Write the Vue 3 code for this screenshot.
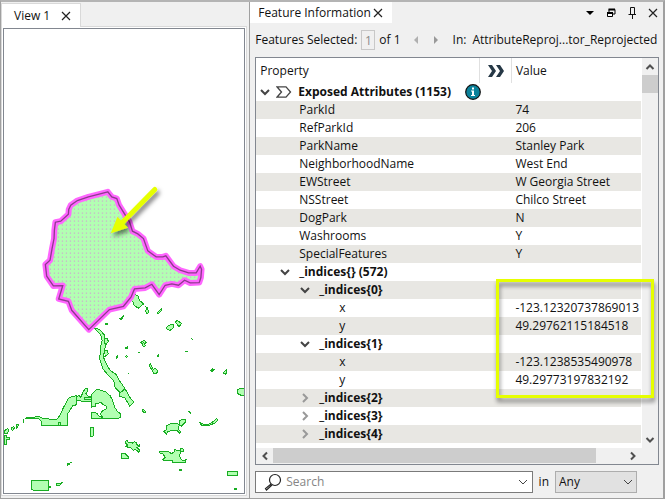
<script setup>
import { computed, ref } from 'vue'

const nodes = ref([
  { id: 0, parent: null, depth: 0, name: 'Exposed Attributes (1153)', open: true, root: true },
  { id: 1, parent: 0, depth: 1, name: 'ParkId', value: '74' },
  { id: 2, parent: 0, depth: 1, name: 'RefParkId', value: '206' },
  { id: 3, parent: 0, depth: 1, name: 'ParkName', value: 'Stanley Park' },
  { id: 4, parent: 0, depth: 1, name: 'NeighborhoodName', value: 'West End' },
  { id: 5, parent: 0, depth: 1, name: 'EWStreet', value: 'W Georgia Street' },
  { id: 6, parent: 0, depth: 1, name: 'NSStreet', value: 'Chilco Street' },
  { id: 7, parent: 0, depth: 1, name: 'DogPark', value: 'N' },
  { id: 8, parent: 0, depth: 1, name: 'Washrooms', value: 'Y' },
  { id: 9, parent: 0, depth: 1, name: 'SpecialFeatures', value: 'Y' },
  { id: 10, parent: 0, depth: 1, name: '_indices{} (572)', open: true },
  { id: 11, parent: 10, depth: 2, name: '_indices{0}', open: true },
  { id: 12, parent: 11, depth: 3, name: 'x', value: '-123.12320737869013' },
  { id: 13, parent: 11, depth: 3, name: 'y', value: '49.29762115184518' },
  { id: 14, parent: 10, depth: 2, name: '_indices{1}', open: true },
  { id: 15, parent: 14, depth: 3, name: 'x', value: '-123.1238535490978' },
  { id: 16, parent: 14, depth: 3, name: 'y', value: '49.29773197832192' },
  { id: 17, parent: 10, depth: 2, name: '_indices{2}', open: false },
  { id: 18, parent: 10, depth: 2, name: '_indices{3}', open: false },
  { id: 19, parent: 10, depth: 2, name: '_indices{4}', open: false },
])

const visible = computed(() =>
  nodes.value.filter((node) => {
    for (let p = node.parent; p !== null; p = nodes.value[p].parent) {
      if (!nodes.value[p].open) return false
    }
    return true
  })
)

const search = ref('')
const scope = ref('Any')
const featureNumber = ref('1')
const coast =
  'M323 65L300 71L265 80L232 91L212 105L206 118L205 132L182 153L166 156L163 180L162 205L156 235L150 270L136 283L140 318L160 347L188 346L176 386L205 393L215 420L266 478L328 418L370 408L393 380L403 356L435 353L455 342L477 373L495 345L515 341L535 345L553 330L570 338L597 337L602 322L604 297L600 288L588 308L565 308L540 300L520 288L497 257L488 260L468 260L443 242L430 205L413 191L397 183L388 155L357 105L350 85L335 80Z'
</script>

<template>
  <main class="workspace">
    <section class="view">
      <div class="tabs">
        <div class="tab view-tab">
          <span>View 1</span>
          <button class="plain" aria-label="Close View 1">
            <svg width="10" height="10" viewBox="0 0 10 10"><path class="thin" d="M1 1L9 9M9 1L1 9" /></svg>
          </button>
        </div>
      </div>
      <div class="view-body">
        <svg class="map" viewBox="12 87 720 1392" preserveAspectRatio="xMidYMid slice" role="img" aria-label="Park map">
          <defs>
            <pattern id="dots" x="2" y="3" width="12" height="12" patternUnits="userSpaceOnUse">
              <rect width="12" height="12" fill="#b2ffb2" />
              <rect x="4" y="4" width="3" height="3" fill="#dd79dd" />
            </pattern>
            <filter id="shade" x="-30%" y="-30%" width="180%" height="180%">
              <feDropShadow dx="7" dy="10" stdDeviation="6" flood-color="#000" flood-opacity=".5" />
            </filter>
          </defs>
          <g class="park" transform="translate(0 990)">
            <path d="M280 -8L302 14L306 30L301 50L299 88L309 116L325 136L341 151L344 170L358 185L359 198L375 203L389 228L401 215L390 202L374 174L354 145L350 134L329 119L316 95L310 80L315 50L314 15L298 -3Z" />
            <path d="M315 26L321 25L325 33L319 41L315 38M315 59L321 61L325 70L318 76L313 79M360 188L374 176" />
            <path d="M76 263L100 261L116 257L128 264L158 267L170 268L180 254L188 236L203 207L211 200L230 196V223L218 226L203 250V286H125V275L116 264L100 263L76 265Z" />
            <path d="M230 198L238 196L242 202L249 184L256 174L262 175V184L257 190L264 197L275 198V213L244 212L230 209ZM252 201H275V207H252ZM175 276H180V286H175Z" />
            <path d="M275 230V192L288 179L298 178L316 184L330 196L338 211L343 230L352 243L361 250V261L357 263H275V245H284L291 250L298 259L307 261L301 250L307 242L320 234V228L308 222L302 215L291 221L285 219V228Z" />
            <path d="M71 265V277M49 284L54 281L56 285L50 293ZM35 292L41 289L44 292L38 300L34 298ZM18 297L24 295L26 300L22 308L14 309L12 304ZM12 316H20V320L28 322V328H20L18 343H12Z" />
            <path d="M271 292H281V312L278 319H271ZM364 370H375L386 380V385H364ZM94 451H146V481H102L94 475ZM148 468H152V472H148Z" />
            <path d="M202 400L208 398V402L202 404ZM212 397L215 394M169 460H181L179 466H170ZM183 459L188 455M539 418H545V421H539ZM703 475H710V478H703ZM682 424H711V436H682Z" />
            <path d="M375 333L381 331L384 336L397 338L402 334L410 336L411 346L418 343L417 349L410 351L418 359L416 365L407 358L399 359L391 350L383 350L377 348L383 344L376 338Z" />
            <path d="M478 363H504L514 370L523 363V358L539 361L542 355L551 356V363L541 364L538 377L541 384L549 391L558 388L554 397H518L516 391L490 391L488 386L496 381L487 369H480Z" />
            <path d="M491 303L500 298V286L513 279L530 278L537 284L534 297L542 305L538 308L530 300L512 301L502 304L499 311ZM538 272L545 267L551 268L557 267L556 275L544 287L538 284Z" />
            <path d="M599 276L609 281L626 281L637 275L649 265L653 269L646 277L629 284L615 286L604 285Z" />
            <path d="M446 104L451 100L456 112L460 117L465 113L473 121L470 128L461 129L457 121ZM426 239L431 238L437 244L434 248L429 244ZM713 178L720 173L732 174V194H721L713 190Z" />
            <path d="M422 36L427 33L432 29L438 37L434 41L435 47L429 48L427 41ZM429 36L434 41M376 53L381 49L382 54L378 56ZM376 78L380 75L382 79L378 81ZM348 80L352 77V83L348 84ZM415 68L419 66M470 77L475 72L476 76L472 79ZM571 25L578 27M554 62L562 65M565 242L572 249M382 132L386 128" />
            <path d="M632 121L637 116L641 118L635 124ZM669 128L678 119V129L675 132ZM510 -2L514 0" />
            <path d="M391 -107L402 -109L414 -102L418 -90L430 -79L414 -66L402 -75L398 -87L386 -94Z" />
            <path d="M438 -70L442 -68L446 -53L440 -50L436 -59L440 -63ZM470 -52L483 -64L485 -60L476 -51ZM360 -35L370 -43L368 -37L362 -32ZM316 -21L322 -19L318 -16Z" />
            <path d="M499 -9L506 -15L520 -18L520 -8L510 0L501 -2ZM525 -24L531 -30L544 -20L537 -11Z" />
          </g>
          <g transform="translate(0 510)">
            <path :d="coast" fill="url(#dots)" stroke="#f6f" stroke-width="18" stroke-linejoin="round" />
            <path :d="coast" fill="none" stroke="#8c3c8c" stroke-width="4" />
            <g filter="url(#shade)">
              <path d="M464 58L366 158" stroke="#e6ff00" stroke-width="15" stroke-linecap="round" />
              <path d="M332 189L352 140L383 173Z" fill="#e6ff00" />
            </g>
          </g>
        </svg>
      </div>
    </section>

    <section class="info">
      <header class="info-head">
        <div class="tab info-tab">
          <span>Feature Information</span>
          <button class="plain" aria-label="Close Feature Information">
            <svg width="10" height="10" viewBox="0 0 10 10"><path class="thin" d="M1 1L9 9M9 1L1 9" /></svg>
          </button>
        </div>
        <div class="window-tools">
          <button class="plain" aria-label="Panel menu">
            <svg width="12" height="12" viewBox="0 0 12 12"><path d="M2 4H10L6 8Z" /></svg>
          </button>
          <button class="plain" aria-label="Float panel">
            <svg width="12" height="12" viewBox="0 0 12 12"><path d="M4 5V2.500H10V7H8" fill="none" stroke="#000" /><path d="M3.500 1.500H10V3.500H3.500Z" /><path d="M2.500 5.500H7.500V9.500H2.500Z" fill="#fff" stroke="#000" /><path d="M2 5H8V7H2Z" /></svg>
          </button>
          <button class="plain" aria-label="Pin panel">
            <svg width="12" height="12" viewBox="0 0 12 12"><path d="M4.500 7V.5H8.500V7M2.500 7.500H10M6.500 8V12" fill="none" stroke="#111" /></svg>
          </button>
          <button class="plain" aria-label="Close panel">
            <svg width="12" height="12" viewBox="0 0 12 12"><path class="thin" d="M2 2L10 10M10 2L2 10" /></svg>
          </button>
        </div>
      </header>

      <div class="selection">
        <label for="feature-number">Features Selected:</label>
        <input id="feature-number" v-model="featureNumber" class="number" disabled />
        <span class="count">of 1</span>
        <button class="plain step" aria-label="Previous feature" disabled>
          <svg width="6" height="10" viewBox="0 0 6 10"><path d="M5 1V9L1 5Z" fill="#b0b0b0" /></svg>
        </button>
        <button class="plain step" aria-label="Next feature">
          <svg width="6" height="10" viewBox="0 0 6 10"><path d="M1 1V9L5 5Z" fill="#999" /></svg>
        </button>
        <span class="in">In:</span>
        <span class="source">AttributeReproj...tor_Reprojected</span>
      </div>

      <div class="grid-frame">
        <div class="table-area">
          <table>
            <colgroup>
              <col class="col-name" />
              <col class="col-flag" />
              <col />
            </colgroup>
            <thead>
              <tr>
                <th scope="col">Property</th>
                <th scope="col" class="flag" aria-label="Details">
                  <svg width="18" height="12" viewBox="0 0 18 12"><path d="M1 0H5L9 6L5 12H1L5 6ZM9 0H13L17 6L13 12H9L13 6Z" fill="#263846" /></svg>
                </th>
                <th scope="col">Value</th>
              </tr>
            </thead>
            <tbody>
              <tr v-for="node in visible" :key="node.id">
                <td :colspan="node.root ? 3 : 2">
                  <div class="node" :class="['depth-' + node.depth, { branch: 'open' in node }]">
                    <button v-if="'open' in node" class="plain toggle" :aria-label="'Toggle ' + node.name" :aria-expanded="node.open" @click="node.open = !node.open">
                      <svg width="12" height="12" viewBox="0 0 12 12">
                        <path v-if="node.open" d="M2 4L6 8L10 4" fill="none" stroke="#444" stroke-width="2" />
                        <path v-else d="M4 2L8 6L4 10" fill="none" stroke="#999" stroke-width="2" />
                      </svg>
                    </button>
                    <span v-else class="toggle"></span>
                    <svg v-if="node.root" class="tag" width="16" height="12" viewBox="0 0 16 12"><path d="M1 .8H10L14.500 6L10 11.200H1L5.500 6Z" fill="#fff" stroke="#444" stroke-width="1.300" /></svg>
                    <span class="name">{{ node.name }}</span>
                    <svg v-if="node.root" width="16" height="16" viewBox="0 0 16 16" role="img" aria-label="Information">
                      <circle cx="8" cy="8" r="7.300" fill="#0b829b" stroke="#111" stroke-width="1.200" />
                      <path d="M7 3.500H9V5.500H7ZM6 6.500H9V11H10V12H6V11H7V7.500H6Z" fill="#fff" />
                    </svg>
                  </div>
                </td>
                <td v-if="!node.root" class="value">{{ node.value }}</td>
              </tr>
            </tbody>
          </table>
        </div>
        <div class="vbar">
          <button class="plain vbtn" aria-label="Scroll up">
            <svg width="10" height="8" viewBox="0 0 10 8"><path d="M1.500 6L5 2.500L8.500 6" fill="none" stroke="#505050" stroke-width="2" /></svg>
          </button>
          <span class="vthumb"></span>
          <button class="plain vbtn" aria-label="Scroll down">
            <svg width="10" height="8" viewBox="0 0 10 8"><path d="M1.500 2L5 5.500L8.500 2" fill="none" stroke="#505050" stroke-width="2" /></svg>
          </button>
        </div>
        <div class="hbar">
          <button class="plain hbtn" aria-label="Scroll left">
            <svg width="8" height="10" viewBox="0 0 8 10"><path d="M6 1.500L2.500 5L6 8.500" fill="none" stroke="#505050" stroke-width="2" /></svg>
          </button>
          <span class="htrack"><span class="hthumb"></span></span>
          <button class="plain hbtn" aria-label="Scroll right">
            <svg width="8" height="10" viewBox="0 0 8 10"><path d="M2 1.500L5.500 5L2 8.500" fill="none" stroke="#505050" stroke-width="2" /></svg>
          </button>
        </div>
        <div class="highlight"></div>
      </div>

      <div class="finder">
        <div class="search">
          <svg width="18" height="18" viewBox="0 0 18 18"><circle cx="11" cy="7" r="5.500" fill="none" stroke="#222" stroke-width="1.200" /><path d="M7 11L6 12M6.500 11.500L1.500 15.500L2.500 17L7.500 12.500Z" fill="#fff" stroke="#222" stroke-width="1.200" /></svg>
          <input v-model="search" type="text" placeholder="Search" aria-label="Search" />
          <button class="plain" aria-label="Search history">
            <svg width="10" height="8" viewBox="0 0 10 8"><path d="M1 2L5 6L9 2" fill="none" stroke="#444" /></svg>
          </button>
        </div>
        <label for="scope">in</label>
        <div class="scope">
          <select id="scope" v-model="scope">
            <option>Any</option>
            <option>Property</option>
            <option>Value</option>
          </select>
          <svg width="10" height="8" viewBox="0 0 10 8"><path d="M1 2L5 6L9 2" fill="none" stroke="#444" /></svg>
        </div>
      </div>
    </section>
  </main>
</template>

<style>
body {
  margin: 0;
  background: #f0f0f0;
}
</style>

<style scoped>
* {
  box-sizing: border-box;
}
.workspace {
  display: grid;
  grid-template-columns: minmax(0, 3fr) minmax(0, 5fr);
  min-height: 100vh;
  border: 1px solid #a0a0a0;
  border-top: 2px solid #b4b4b4;
  border-right: 2px solid #a0a0a0;
  background: #f0f0f0;
  color: #111;
  font: 12px/18px "Open Sans", "Noto Sans", sans-serif;
}
input,
select,
button {
  font: inherit;
  color: inherit;
}
svg {
  display: block;
  flex: none;
}
.thin {
  fill: none;
  stroke: #222;
  stroke-width: 1.2;
}
.plain {
  display: flex;
  align-items: center;
  justify-content: center;
  padding: 0;
  border: 0;
  background: none;
}
.view {
  display: flex;
  flex-direction: column;
  padding: 1px 2px 2px 0;
}
.tabs {
  display: flex;
}
.tab {
  display: flex;
  align-items: center;
  background: #fff;
}
.view-tab {
  z-index: 1;
  height: 24px;
  margin-bottom: -1px;
  padding: 0 9px 0 12px;
  gap: 11px;
  border: 1px solid #d9d9d9;
  border-bottom: 0;
}
.view-body {
  display: flex;
  flex: 1;
  padding: 1px;
  border: 1px solid #d9d9d9;
  background: #fff;
}
.map {
  flex: 1;
  width: 0;
  min-width: 0;
  min-height: 100%;
  border: 1px solid #828790;
}
.park path {
  fill: #b2ffb2;
  stroke: #18ad22;
  stroke-width: 3;
  shape-rendering: crispEdges;
}
.info {
  display: flex;
  flex-direction: column;
  min-width: 0;
  border-left: 1px solid #a0a0a0;
}
.info-head {
  display: flex;
  justify-content: space-between;
  height: 21px;
}
.info-tab {
  padding: 0 9px 0 8px;
  gap: 2px;
}
.window-tools {
  display: flex;
  align-items: center;
  padding-right: 4px;
  gap: 9px;
}
.selection {
  display: flex;
  align-items: center;
  height: 34px;
  padding-left: 5px;
  white-space: nowrap;
}
.number {
  width: 14px;
  height: 20px;
  margin: 0 4px;
  padding: 0;
  border: 1px solid #c8c8c8;
  background: #f0f0f0;
  color: #8a8a8a;
  text-align: center;
}
.count {
  margin-right: 12px;
}
.step {
  margin-right: 14px;
}
.in {
  margin-right: 6px;
}
.grid-frame {
  position: relative;
  display: grid;
  flex: 1;
  grid-template-columns: minmax(0, 1fr) 16px;
  grid-template-rows: 1fr 16px;
  margin: 0 4px 0 5px;
  border: 1px solid #828790;
  background: #f0f0f0;
}
.table-area {
  padding-right: 1px;
  background: #fff;
}
table {
  width: 100%;
  table-layout: fixed;
  border-collapse: collapse;
  white-space: nowrap;
}
.col-name {
  width: 58%;
}
.col-flag {
  width: 32px;
}
th {
  height: 25px;
  padding: 0 4px;
  font-weight: 400;
  text-align: left;
}
.flag {
  padding: 0 7px;
  border: 1px solid #e0e0e0;
  border-width: 0 1px;
}
td {
  height: 18px;
  padding: 0;
}
tbody tr:nth-child(even) {
  background: #e8e7e3;
}
.node {
  display: flex;
  align-items: center;
  height: 18px;
}
.depth-0 {
  padding-left: 3px;
}
.depth-1 {
  padding-left: 23px;
}
.depth-2 {
  padding-left: 43px;
}
.depth-3 {
  padding-left: 63px;
}
.toggle {
  width: 12px;
  margin-right: 8px;
}
.depth-0 .toggle {
  margin-right: 5px;
}
.tag {
  margin-right: 6px;
}
.depth-0 .name {
  margin-right: 14px;
}
.branch {
  font-weight: 700;
}
.value {
  padding-left: 4px;
}
.vbar {
  display: flex;
  flex-direction: column;
}
.vbtn {
  height: 17px;
}
.vthumb {
  height: 18px;
  margin-bottom: auto;
  background: #cdcdcd;
}
.hbar {
  display: flex;
  margin-right: 1px;
}
.hbtn {
  width: 17px;
}
.htrack {
  flex: 1;
}
.hthumb {
  display: block;
  width: 92%;
  height: 15px;
  background: #cdcdcd;
}
.highlight {
  position: absolute;
  top: 221px;
  right: 4px;
  width: 158px;
  height: 119px;
  border: 3px solid #e6ff00;
  filter: drop-shadow(1px 4px 2px rgba(0, 0, 0, 0.45));
  pointer-events: none;
}
.finder {
  display: flex;
  align-items: center;
  padding: 6px 26px 5px 5px;
  gap: 6px;
}
.search {
  display: flex;
  flex: 1;
  align-items: center;
  height: 22px;
  padding: 0 4px 0 8px;
  gap: 4px;
  border: 1px solid #7a7a7a;
  background: #fff;
}
.search input {
  flex: 1;
  min-width: 0;
  height: 18px;
  padding: 0;
  border: 0;
  outline: 0;
  background: none;
}
.search input::placeholder {
  color: #858585;
  opacity: 1;
}
.scope {
  display: grid;
  width: 82px;
  align-items: center;
}
.scope select,
.scope svg {
  grid-area: 1 / 1;
}
.scope select {
  height: 22px;
  padding: 0 3px;
  border: 1px solid #adadad;
  border-radius: 0;
  appearance: none;
  background: #e1e1e1;
}
.scope svg {
  justify-self: end;
  margin-right: 4px;
  pointer-events: none;
}
</style>
